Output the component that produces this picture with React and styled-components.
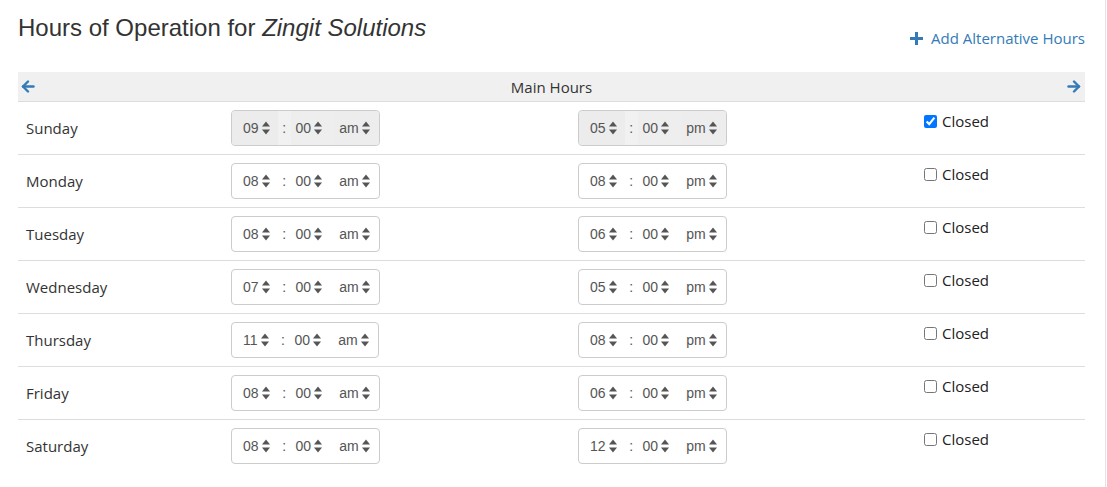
import React from "react";
import styled, { createGlobalStyle } from "styled-components";

const GlobalStyle = createGlobalStyle`
  html, body {
    margin: 0;
    padding: 0;
    background: #fff;
  }
  body {
    font-family: "Open Sans", "Liberation Sans", Arial, sans-serif;
    color: #333;
  }
`;

const Page = styled.div`
  width: 1106px;
  min-height: 487px;
  box-sizing: border-box;
  border-right: 1px solid #e3e3e3;
  padding: 0 20px 0 18px;
`;

const TitleRow = styled.div`
  display: flex;
  justify-content: space-between;
  align-items: flex-start;
  height: 72px;
`;

const Title = styled.h1`
  margin: 15px 0 0;
  font-family: "Liberation Sans", Arial, sans-serif;
  font-weight: normal;
  font-size: 24px;
  line-height: 26px;
  color: #333;

  em {
    font-style: italic;
  }
`;

const AddLink = styled.a`
  display: flex;
  align-items: center;
  gap: 8px;
  margin-top: 28px;
  font-size: 15px;
  line-height: 20px;
  color: #337ab7;
  text-decoration: none;
  cursor: pointer;
`;

const HeaderBar = styled.div`
  display: flex;
  align-items: center;
  justify-content: space-between;
  height: 29px;
  padding: 0 3px;
  background: #f0f0f0;
  border-bottom: 1px solid #ddd;
  font-size: 15px;
  color: #333;
`;

const ArrowButton = styled.span`
  display: flex;
  align-items: center;
  width: 15px;
  cursor: pointer;
`;

const Row = styled.div`
  display: grid;
  grid-template-columns: 205px 347px 346px 1fr;
  border-bottom: ${(p) => (p.last ? "none" : "1px solid #ddd")};
`;

const Cell = styled.div`
  padding: 8px;
  display: flex;
  align-items: ${(p) => (p.top ? "flex-start" : "center")};
  min-height: 36px;
`;

const DayName = styled.span`
  font-size: 15px;
  color: #333;
`;

const TimeBox = styled.div`
  display: inline-flex;
  align-items: stretch;
  height: 34px;
  border: 1px solid #ccc;
  border-radius: 4px;
  overflow: hidden;
  background: ${(p) => (p.disabled ? "#eee" : "#fff")};
  font-family: "Liberation Sans", Arial, sans-serif;
  font-size: 14px;
  color: #555;
`;

const Segment = styled.span`
  display: flex;
  align-items: center;
  padding: ${(p) => p.pad};
  gap: ${(p) => p.gap || "2px"};
  background: ${(p) => (p.disabled ? p.shade || "#ececec" : "transparent")};
`;

const Colon = styled.span`
  display: flex;
  align-items: center;
  justify-content: center;
  width: 13px;
  padding-bottom: 1px;
  background: ${(p) => (p.disabled ? "#f1f1f1" : "transparent")};
`;

const CheckLabel = styled.label`
  display: flex;
  align-items: center;
  gap: 5px;
  margin-top: 1px;
  font-size: 15px;
  line-height: 20px;
  color: #222;

  input {
    margin: 0;
    width: 13px;
    height: 13px;
  }
`;

const SortIcon = () => (
  <svg width="10" height="16" viewBox="0 0 10 16" fill="#555">
    <path d="M5 1.5 L9 6.5 H1 Z" />
    <path d="M5 14.5 L9 9.5 H1 Z" />
  </svg>
);

const ArrowIcon = ({ dir }) => (
  <svg
    width="14"
    height="13"
    viewBox="0 0 14 13"
    fill="none"
    stroke="#337ab7"
    strokeWidth="2.4"
    strokeLinecap="round"
    strokeLinejoin="round"
    style={dir === "right" ? { transform: "scaleX(-1)" } : undefined}
  >
    <path d="M12.5 6.5 H2" />
    <path d="M7 1.5 L2 6.5 L7 11.5" />
  </svg>
);

const PlusIcon = () => (
  <svg width="13" height="13" viewBox="0 0 13 13" stroke="#337ab7" strokeWidth="3">
    <path d="M6.5 0 V13 M0 6.5 H13" />
  </svg>
);

const TimeInput = ({ hour, minute, period, disabled }) => (
  <TimeBox disabled={disabled}>
    <Segment disabled={disabled} pad="0 7px 0 11px">
      {hour}
      <SortIcon />
    </Segment>
    <Colon disabled={disabled}>:</Colon>
    <Segment disabled={disabled} shade="#eee" pad="0 11px 0 5px">
      {minute}
      <SortIcon />
    </Segment>
    <Segment disabled={disabled} shade="#ededed" gap="2px" pad="0 8px 0 5px">
      {period}
      <SortIcon />
    </Segment>
  </TimeBox>
);

const days = [
  { name: "Sunday", open: "09", close: "05", closed: true },
  { name: "Monday", open: "08", close: "08" },
  { name: "Tuesday", open: "08", close: "06" },
  { name: "Wednesday", open: "07", close: "05" },
  { name: "Thursday", open: "11", close: "08" },
  { name: "Friday", open: "08", close: "06" },
  { name: "Saturday", open: "08", close: "12" },
];

export default function App() {
  return (
    <Page>
      <GlobalStyle />
      <TitleRow>
        <Title>
          Hours of Operation for <em>Zingit Solutions</em>
        </Title>
        <AddLink>
          <PlusIcon />
          Add Alternative Hours
        </AddLink>
      </TitleRow>
      <HeaderBar>
        <ArrowButton>
          <ArrowIcon dir="left" />
        </ArrowButton>
        <span>Main Hours</span>
        <ArrowButton>
          <ArrowIcon dir="right" />
        </ArrowButton>
      </HeaderBar>
      {days.map((d, i) => (
        <Row key={d.name} last={i === days.length - 1}>
          <Cell>
            <DayName>{d.name}</DayName>
          </Cell>
          <Cell>
            <TimeInput hour={d.open} minute="00" period="am" disabled={d.closed} />
          </Cell>
          <Cell>
            <TimeInput hour={d.close} minute="00" period="pm" disabled={d.closed} />
          </Cell>
          <Cell top>
            <CheckLabel>
              <input type="checkbox" defaultChecked={!!d.closed} />
              Closed
            </CheckLabel>
          </Cell>
        </Row>
      ))}
    </Page>
  );
}
